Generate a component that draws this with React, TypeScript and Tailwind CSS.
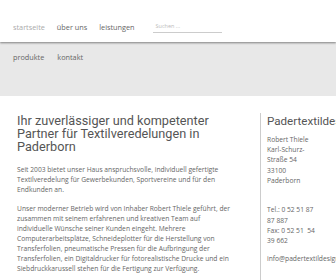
export default function App() {
  return (
    <div className="w-[336px] h-[280px] overflow-hidden bg-white font-['Open_Sans',sans-serif] text-[#666]">
      <header className="relative z-10 h-[42px] bg-white shadow-[0_1px_2px_rgba(0,0,0,0.45)] flex items-end pb-[9px] pl-[13px] text-[7.3px]">
        <nav className="flex items-center gap-[12px]">
          <span className="text-[#aaa]">startseite</span>
          <span className="text-[#666]">über uns</span>
          <span className="text-[#666]">leistungen</span>
        </nav>
        <div className="ml-[18px] w-[69px] border-b border-[#ccc] pl-[3px] pb-[2px] text-[5.5px] text-[#bbb]">
          Suchen ...
        </div>
      </header>
      <div className="h-[54px] bg-[#e8e8e8] pt-[10px] pl-[13px] flex gap-[13px] text-[7.3px] text-[#666]">
        <span>produkte</span>
        <span>kontakt</span>
      </div>
      <main className="flex pt-[19px]">
        <section className="w-[260px] pl-[17px] pr-[26px]">
          <h1 className="font-['Roboto',sans-serif] text-[12.7px] leading-[12.8px] text-[#555]">
            Ihr zuverlässiger und kompetenter Partner für Textilveredelungen in Paderborn
          </h1>
          <p className="mt-[12px] text-[6.7px] leading-[10px]">
            Seit 2003 bietet unser Haus anspruchsvolle, individuell gefertigte Textilveredelung für Gewerbekunden, Sportvereine und für den Endkunden an.
          </p>
          <p className="mt-[9px] text-[6.7px] leading-[10px]">
            Unser moderner Betrieb wird von Inhaber Robert Thiele geführt, der zusammen mit seinem erfahrenen und kreativen Team auf individuelle Wünsche seiner Kunden eingeht. Mehrere Computerarbeitsplätze, Schneideplotter für die Herstellung von Transferfolien, pneumatische Pressen für die Aufbringung der Transferfolien, ein Digitaldrucker für fotorealistische Drucke und ein Siebdruckkarussell stehen für die Fertigung zur Verfügung.
          </p>
        </section>
        <aside className="border-l border-[#ccc] pl-[6px] w-[76px] h-[170px] -mt-[2px] pt-[2px]">
          <h2 className="font-['Roboto',sans-serif] text-[11.6px] leading-[12.8px] text-[#555] whitespace-nowrap">
            Padertextildesign
          </h2>
          <p className="mt-[7px] w-[52px] text-[6.7px] leading-[10.3px]">
            Robert Thiele
            <br />
            Karl-Schurz-Straße 54
            <br />
            33100
            <br />
            Paderborn
          </p>
          <p className="mt-[19px] w-[52px] text-[6.7px] leading-[10.3px]">
            Tel.: 0 52 51 87 87 887
            <br />
            Fax: 0 52 51&nbsp; 54 39 662
          </p>
          <p className="mt-[8px] text-[6.7px] leading-[10px] whitespace-nowrap">info@padertextildesign.de</p>
        </aside>
      </main>
    </div>
  )
}
